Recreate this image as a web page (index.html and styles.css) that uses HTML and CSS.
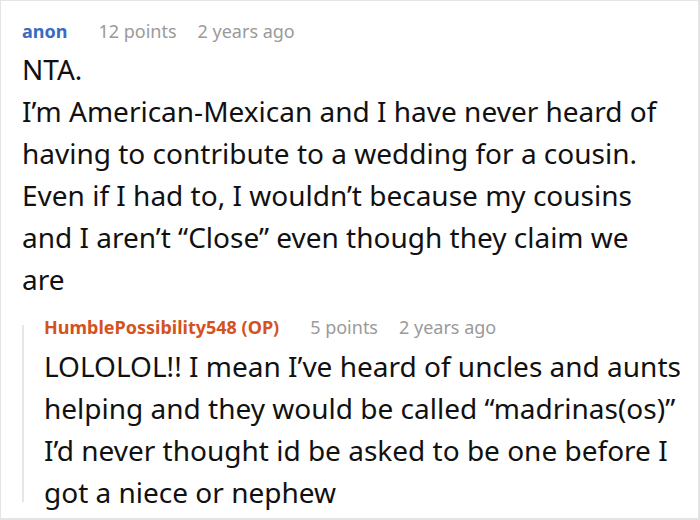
FILE: index.html
```html
<!DOCTYPE html>
<html>
<head>
<meta charset="utf-8">
<link rel="stylesheet" href="styles.css">
</head>
<body>
<div class="frame">
  <div class="comment">
    <div class="meta">
      <span class="author author-blue">anon</span>
      <span class="points">12 points</span>
      <span class="time">2 years ago</span>
    </div>
    <div class="body">
      <p>NTA.</p>
      <p>I’m American-Mexican and I have never heard of<br>having to contribute to a wedding for a cousin.<br>Even if I had to, I wouldn’t because my cousins<br>and I aren’t “Close” even though they claim we<br>are</p>
    </div>
    <div class="reply">
      <div class="meta">
        <span class="author author-op">HumblePossibility548 (OP)</span>
        <span class="points">5 points</span>
        <span class="time">2 years ago</span>
      </div>
      <div class="body">
        <p>LOLOLOL!! I mean I’ve heard of uncles and aunts<br>helping and they would be called “madrinas(os)”<br>I’d never thought id be asked to be one before I<br>got a niece or nephew</p>
      </div>
    </div>
  </div>
</div>
</body>
</html>
```

FILE: styles.css
```css
html, body {
  margin: 0;
  padding: 0;
  background: #ffffff;
}
body {
  font-family: "Noto Sans", "Open Sans", sans-serif;
  color: #111111;
}
.frame {
  width: 700px;
  height: 520px;
  box-sizing: border-box;
  border: 1px solid #e4e4e4;
  border-bottom-width: 2px;
  border-right-width: 2px;
  overflow: hidden;
}
.comment {
  padding: 18px 4px 0 21px;
}
.meta {
  display: flex;
  align-items: center;
  height: 24px;
  font-size: 18px;
  line-height: 24px;
  color: #9a9a9a;
  white-space: nowrap;
}
.author {
  font-weight: 700;
  margin-right: 31px;
}
.author-blue {
  color: #3a6bbf;
}
.author-op {
  color: #d4521d;
}
.points {
  margin-right: 21px;
}
.body {
  margin-top: 5px;
  font-size: 28px;
  line-height: 42px;
  white-space: nowrap;
}
.body p {
  margin: 0;
}
.reply {
  position: relative;
  margin-top: 15px;
  padding-left: 22px;
}
.reply::before {
  content: "";
  position: absolute;
  left: 0;
  top: 10px;
  bottom: 11px;
  width: 2px;
  background: #e6e6e6;
}
.reply .body {
  margin-top: 6px;
}
```
